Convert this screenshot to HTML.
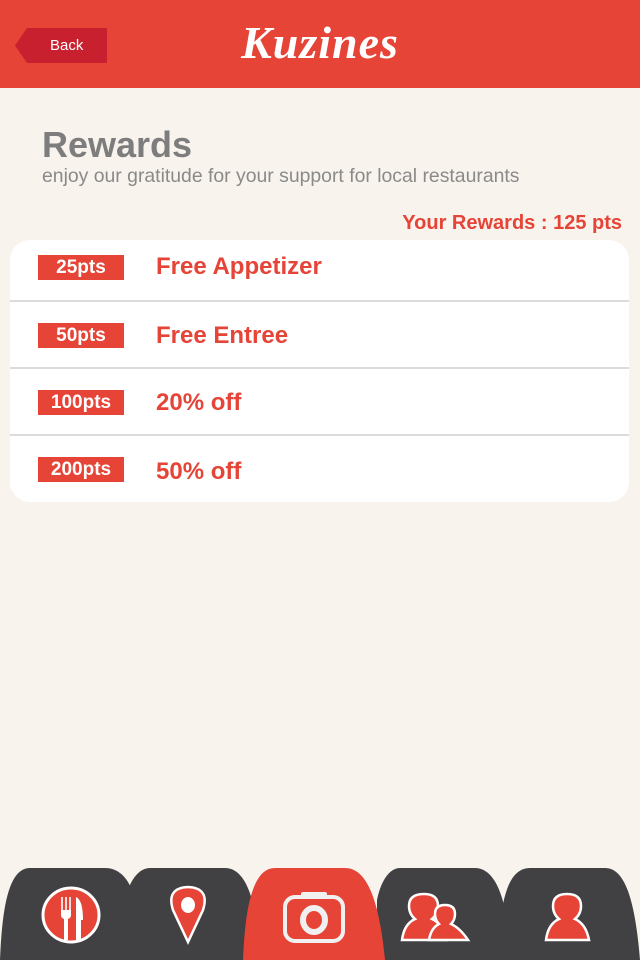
<!DOCTYPE html>
<html><head><meta charset="utf-8"><style>
*{margin:0;padding:0;box-sizing:border-box}
body{width:640px;height:960px;background:#f8f3ed;font-family:"Liberation Sans",Arial,sans-serif;position:relative;overflow:hidden}
.hdr{position:absolute;left:0;top:0;width:640px;height:88px;background:#e54437}
.back{position:absolute;left:15px;top:28px;width:92px;height:35px}
.back span{position:absolute;left:35px;top:9px;color:#fff;font-size:15px}
.logo{position:absolute;left:0;width:640px;top:16px;text-align:center;color:#fff;font-family:"Liberation Serif",serif;font-style:italic;font-weight:bold;font-size:46px;letter-spacing:1px}
h1{position:absolute;left:42px;top:124px;font-size:36px;color:#7d7d7d;font-weight:bold}
.sub{position:absolute;left:42px;top:165px;font-size:19.4px;color:#8a8a8a}
.yr{position:absolute;right:18px;top:212px;font-size:20px;color:#e54437;font-weight:bold}
.card{position:absolute;left:10px;top:240px;width:619px;height:262px;background:#fff;border-radius:20px;overflow:hidden}
.line{position:absolute;left:0;width:619px;height:2px;background:#dcdcdc}
.b{position:absolute;left:28px;width:86px;height:25px;background:#e54437;color:#fff;font-weight:bold;font-size:19px;text-align:center;line-height:25px}
.t{position:absolute;left:146px;color:#e54437;font-weight:bold;font-size:24px}
</style></head><body>
<div class="hdr">
<svg class="back" viewBox="0 0 92 35"><polygon points="12,0 92,0 92,35 12,35 0,17.5" fill="#c8202f"/></svg>
<div class="back" style="background:none"><span>Back</span></div>
<div class="logo">Kuzines</div>
</div>
<h1>Rewards</h1>
<div class="sub">enjoy our gratitude for your support for local restaurants</div>
<div class="yr">Your Rewards : 125 pts</div>
<div class="card">
<div class="b" style="top:15px">25pts</div><div class="t" style="top:13px">Free Appetizer</div>
<div class="line" style="top:60px"></div>
<div class="b" style="top:83px">50pts</div><div class="t" style="top:82px">Free Entree</div>
<div class="line" style="top:127px"></div>
<div class="b" style="top:150px">100pts</div><div class="t" style="top:149px">20% off</div>
<div class="line" style="top:194px"></div>
<div class="b" style="top:217px">200pts</div><div class="t" style="top:218px">50% off</div>
</div>
<svg style="position:absolute;left:0;top:860px" width="640" height="100" viewBox="0 0 640 100">
<path d="M0,100 C2,50 8,8 30,8 L105,8 C120,8 128,20 132,30 L132,100Z" fill="#414042"/>
<path d="M128,100 L128,30 C132,18 140,8 150,8 L225,8 C240,8 248,25 252,40 L252,100Z" fill="#414042"/>
<path d="M377,100 L377,40 C381,20 390,8 400,8 L475,8 C490,8 500,25 505,50 L505,100Z" fill="#414042"/>
<path d="M502,100 L502,50 C506,25 514,8 530,8 L605,8 C625,8 635,40 640,100Z" fill="#414042"/>
<path d="M243,100 C245,50 252,8 275,8 L345,8 C370,8 380,50 385,100Z" fill="#e54437"/>
<ellipse cx="71" cy="55" rx="28" ry="27" fill="#e54437" stroke="#fff" stroke-width="3"/>
<path d="M62,37 L62,52 M66,37 L66,52 M70,37 L70,52" stroke="#fff" stroke-width="1.6" fill="none"/>
<path d="M61,50 L71,50 L71,55 Q71,58 68,59 L68,80 L64,80 L64,59 Q61,58 61,55Z" fill="#fff"/>
<path d="M76,80 L76,37 Q83,40 83,60 L81,60 L81,80Z" fill="#fff"/>
<path d="M188,82 L173,50 Q166,28 188,27 Q210,28 203,50Z" fill="#e54437" stroke="#fff" stroke-width="2.5"/>
<ellipse cx="188" cy="45" rx="7" ry="8" fill="#fff"/>
<rect x="285" y="37" width="58" height="44" rx="10" fill="none" stroke="#f0f0f0" stroke-width="4"/>
<rect x="301" y="32" width="26" height="6" rx="2" fill="#f0f0f0"/>
<ellipse cx="314" cy="60" rx="11" ry="12" fill="none" stroke="#f0f0f0" stroke-width="6"/>
<path d="M402,80 Q404,64 415,59 Q409,54 409,46 Q409,34 424,34 Q438,34 438,46 Q438,54 432,59 Q443,64 446,80Z" fill="#e54437" stroke="#fff" stroke-width="2.5"/>
<path d="M429,80 Q431,68 439,64 Q435,60 435,54 Q435,45 445,45 Q455,45 455,54 Q455,60 451,64 Q460,68 468,80Z" fill="#e54437" stroke="#fff" stroke-width="2.5"/>
<path d="M546,80 Q548,64 559,59 Q553,54 553,46 Q553,34 567,34 Q581,34 581,46 Q581,54 575,59 Q586,64 589,80Z" fill="#e54437" stroke="#fff" stroke-width="2.5"/>
</svg>
</body></html>
